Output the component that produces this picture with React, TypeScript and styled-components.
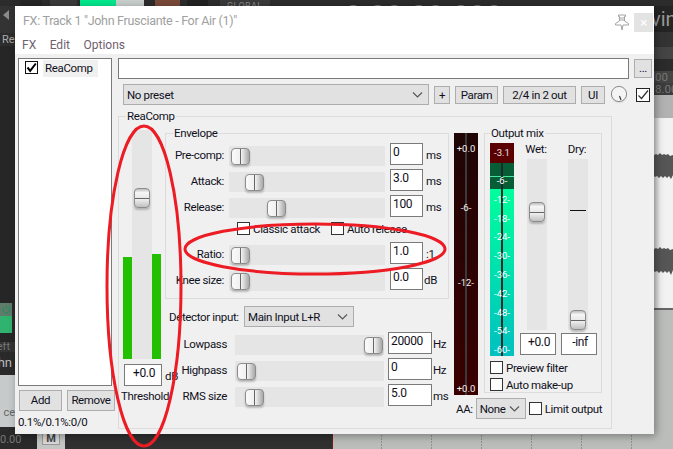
import React, { FC } from "react";
import styled, { createGlobalStyle } from "styled-components";

const Colors = {
    face: "#f0f0f0",
    control: "#e1e1e1",
    track: "#e5e5e5",
    line: "#dcdcdc",
    border: "#7a7a7a",
    btnBorder: "#adadad",
    text: "#10101c",
};

const GlobalStyle = createGlobalStyle`
    html, body {
        margin: 0;
        padding: 0;
        background: #2a2a2a;
    }
    * {
        box-sizing: border-box;
    }
    body {
        font-family: "Roboto", "Liberation Sans", sans-serif;
        font-size: 11.5px;
        letter-spacing: -0.35px;
        color: ${Colors.text};
    }
`;

type SliderProps = {
    label: string;
    value: string;
    unit: string;
    left: number;
    unitGap?: number;
};

const Chevron: FC = () => (
    <ChevronIcon width="11" height="6" viewBox="0 0 11 6">
        <polyline points="1,0.5 5.5,5 10,0.5" fill="none" stroke="#555" strokeWidth="1.1" />
    </ChevronIcon>
);

const CheckBox: FC<{ checked?: boolean }> = ({ checked }) => (
    <CheckSquare>
        {checked && (
            <svg width="11" height="11" viewBox="0 0 11 11">
                <polyline points="1.5,5.5 4.2,8.8 9.8,1.5" fill="none" stroke="#111" strokeWidth="1.7" />
            </svg>
        )}
    </CheckSquare>
);

const EnvelopeSlider: FC<SliderProps> = ({ label, value, unit, left, unitGap }) => (
    <EnvelopeRow>
        <EnvelopeLabel>{label}</EnvelopeLabel>
        <HTrack $width={156}>
            <HThumb $left={left} />
        </HTrack>
        <ValueBox $width={33}>{value}</ValueBox>
        <Unit $gap={unitGap}>{unit}</Unit>
    </EnvelopeRow>
);

const FilterSlider: FC<SliderProps> = ({ label, value, unit, left }) => (
    <FilterRow>
        <FilterLabel>{label}</FilterLabel>
        <HTrack $width={149}>
            <HThumb $left={left} />
        </HTrack>
        <FilterValue $width={44}>{value}</FilterValue>
        <Unit $gap={1}>{unit}</Unit>
    </FilterRow>
);

const meterTicks = [
    { label: "-6-", top: 38 },
    { label: "-12-", top: 57 },
    { label: "-18-", top: 76 },
    { label: "-24-", top: 94 },
    { label: "-30-", top: 113 },
    { label: "-36-", top: 132 },
    { label: "-42-", top: 151 },
    { label: "-48-", top: 170 },
    { label: "-54-", top: 188 },
    { label: "-60-", top: 207 },
];

const App: FC = () => {
    return (
        <Desktop>
            <GlobalStyle />
            <TopStrip>
                <TopGap $width={20} />
                <TopKnob $width={22} $color="#262626" />
                <TopGap $width={8} />
                <TopKnob $width={27} $color="#3a3a3a" />
                <TopGap $width={3} />
                <TopBlock $width={36} $color="#00e88c" />
                <TopKnob $width={28} $color="#c8cfcc" />
                <TopGap $width={11} />
                <TopKnob $width={25} $color="#7a4a38" />
                <TopGap $width={7} />
                <TopKnob $width={21} $color="#222" />
                <TopGap $width={12} />
                <TopLabel>GLOBAL</TopLabel>
                <TimeDigits>0:00:00.000</TimeDigits>
            </TopStrip>

            <Middle>
                <LeftStrip>
                    <LeftBand $height={27} $color="#333">
                        <BackArrow />
                    </LeftBand>
                    <LeftBand $height={13} $color="#2d2d2d">
                        <LeftText $color="#aaa" $left={2}>Re</LeftText>
                    </LeftBand>
                    <LeftBand $height={257} $color="#262626" />
                    <PowerBlock>
                        <PowerIcon width="9" height="9" viewBox="0 0 9 9">
                            <path d="M2.3 2 A3.4 3.4 0 1 0 6.7 2 M4.5 0.5 V4" fill="none" stroke="#1f8f55" strokeWidth="1" />
                        </PowerIcon>
                    </PowerBlock>
                    <PowerLit />
                    <LeftBand $height={9} $color="#262626" />
                    <LeftBand $height={10} $color="#333">
                        <LeftText $color="#777" $right={5} $line={10}>Left</LeftText>
                    </LeftBand>
                    <LeftBand $height={23} $color="#2a2a2a">
                        <LeftText $color="#bbb" $size={13} $right={3} $top={4}>John</LeftText>
                    </LeftBand>
                    <LeftBand $height={52} $color="#c6caca">
                        <LeftText $color="#666" $right={0} $top={31}>ce</LeftText>
                    </LeftBand>
                    <LeftBand $height={7} $color="#2a2a2a" />
                </LeftStrip>

                <FxWindow>
                    <TitleArea>
                        <TitleRow>
                            <TitleText>FX: Track 1 "John Frusciante - For Air (1)"</TitleText>
                            <PinIcon width="16" height="17" viewBox="0 0 16 17">
                                <path
                                    d="M4.5 1 H11.5 V2.5 H10.5 V7 L14.5 9.5 V11 H9 L8 16 L7 11 H1.5 V9.5 L5.5 7 V2.5 H4.5 Z M7 3 V7 M9 3 V7"
                                    fill="#fff"
                                    stroke="#9a9a9a"
                                    strokeWidth="0.9"
                                />
                            </PinIcon>
                            <CloseButton>×</CloseButton>
                        </TitleRow>
                        <MenuBar>
                            <MenuItem>FX</MenuItem>
                            <MenuItem>Edit</MenuItem>
                            <MenuItem>Options</MenuItem>
                        </MenuBar>
                    </TitleArea>

                    <WindowBody>
                        <Sidebar>
                            <FxList>
                                <FxItem>
                                    <FxCheck>
                                        <svg width="11" height="11" viewBox="0 0 11 11">
                                            <polyline points="1.5,5.5 4.2,8.8 9.8,1.5" fill="none" stroke="#000" strokeWidth="2" />
                                        </svg>
                                    </FxCheck>
                                    <FxName>ReaComp</FxName>
                                </FxItem>
                            </FxList>
                            <ListButtons>
                                <ActionButton $width={43} $height={21}>Add</ActionButton>
                                <ActionButton $width={48} $height={21}>Remove</ActionButton>
                            </ListButtons>
                            <StatusText>0.1%/0.1%:0/0</StatusText>
                        </Sidebar>

                        <MainPane>
                            <PathRow>
                                <PathInput />
                                <BrowseButton $width={18} $height={19}>...</BrowseButton>
                            </PathRow>
                            <PresetRow>
                                <ComboBox $width={306}>
                                    <span>No preset</span>
                                    <Chevron />
                                </ComboBox>
                                <ActionButton $width={16} $height={18}>+</ActionButton>
                                <ActionButton $width={43} $height={18}>Param</ActionButton>
                                <ActionButton $width={73} $height={18}>2/4 in 2 out</ActionButton>
                                <ActionButton $width={24} $height={18}>UI</ActionButton>
                                <KnobIcon width="18" height="20" viewBox="0 0 18 20">
                                    <circle cx="9" cy="10.5" r="8" fill="#d8d8d8" opacity="0.6" />
                                    <circle cx="9" cy="9" r="7.6" fill="#f4f4f4" stroke="#8a8a8a" />
                                    <line x1="9.5" y1="11" x2="11" y2="15" stroke="#333" strokeWidth="1.1" />
                                </KnobIcon>
                                <EnableBox>
                                    <svg width="12" height="12" viewBox="0 0 12 12">
                                        <polyline points="1.5,6.5 4.5,9.5 11,1.5" fill="none" stroke="#333" strokeWidth="1.2" />
                                    </svg>
                                </EnableBox>
                            </PresetRow>

                            <PluginGroup>
                                <GroupLegend $left={7}>ReaComp</GroupLegend>

                                <ThresholdColumn>
                                    <ThresholdFader>
                                        <LevelSlot>
                                            <LevelFill $height={102} />
                                        </LevelSlot>
                                        <VTrack $width={20} $height={229}>
                                            <VThumb $top={58} />
                                        </VTrack>
                                        <LevelSlot>
                                            <LevelFill $height={105} />
                                        </LevelSlot>
                                    </ThresholdFader>
                                    <ThresholdValue>
                                        <ValueBox $width={38} $center>+0.0</ValueBox>
                                        <Unit>dB</Unit>
                                    </ThresholdValue>
                                    <ThresholdLabel>Threshold</ThresholdLabel>
                                </ThresholdColumn>

                                <MiddleColumn>
                                    <EnvelopeGroup>
                                        <GroupLegend $left={7}>Envelope</GroupLegend>
                                        <EnvelopeSlider label="Pre-comp:" value="0" unit="ms" left={2} />
                                        <EnvelopeSlider label="Attack:" value="3.0" unit="ms" left={16} />
                                        <EnvelopeSlider label="Release:" value="100" unit="ms" left={38} />
                                        <AttackOptions>
                                            <CheckLabel $width={94}>
                                                <CheckBox />
                                                <span>Classic attack</span>
                                            </CheckLabel>
                                            <CheckLabel>
                                                <CheckBox />
                                                <span>Auto release</span>
                                            </CheckLabel>
                                        </AttackOptions>
                                        <EnvelopeSlider label="Ratio:" value="1.0" unit=":1" left={2} />
                                        <EnvelopeSlider label="Knee size:" value="0.0" unit="dB" left={2} unitGap={1} />
                                    </EnvelopeGroup>

                                    <DetectorRow>
                                        <DetectorLabel>Detector input:</DetectorLabel>
                                        <ComboBox $width={110}>
                                            <span>Main Input L+R</span>
                                            <Chevron />
                                        </ComboBox>
                                    </DetectorRow>
                                    <FilterSlider label="Lowpass" value="20000" unit="Hz" left={129} />
                                    <FilterSlider label="Highpass" value="0" unit="Hz" left={2} />
                                    <FilterSlider label="RMS size" value="5.0" unit="ms" left={10} />
                                </MiddleColumn>

                                <RightColumn>
                                    <MeterRow>
                                        <GainMeter>
                                            <GainLabel $top={10}>+0.0</GainLabel>
                                            <GainLabel $top={69}>-6-</GainLabel>
                                            <GainLabel $top={144}>-12-</GainLabel>
                                            <GainLabel $top={250}>+0.0</GainLabel>
                                        </GainMeter>
                                        <OutputGroup>
                                            <GroupLegend $left={5}>Output mix</GroupLegend>
                                            <OutputControls>
                                                <OutputMeter>
                                                    <PeakCell>-3.1</PeakCell>
                                                    <HeldCell />
                                                    <LevelCell />
                                                    {meterTicks.map((tick) => (
                                                        <MeterTick key={tick.label} $top={tick.top}>
                                                            {tick.label}
                                                        </MeterTick>
                                                    ))}
                                                </OutputMeter>
                                                <MixColumn>
                                                    <MixLabel>Wet:</MixLabel>
                                                    <VTrack $width={20} $height={171}>
                                                        <VThumb $top={43} />
                                                    </VTrack>
                                                    <ValueBox $width={36} $center>+0.0</ValueBox>
                                                </MixColumn>
                                                <MixColumn>
                                                    <MixLabel>Dry:</MixLabel>
                                                    <VTrack $width={20} $height={171}>
                                                        <UnityMark />
                                                        <VThumb $top={151} />
                                                    </VTrack>
                                                    <ValueBox $width={36} $center>-inf</ValueBox>
                                                </MixColumn>
                                            </OutputControls>
                                            <OutputChecks>
                                                <CheckLabel>
                                                    <CheckBox />
                                                    <span>Preview filter</span>
                                                </CheckLabel>
                                                <CheckLabel>
                                                    <CheckBox />
                                                    <span>Auto make-up</span>
                                                </CheckLabel>
                                            </OutputChecks>
                                        </OutputGroup>
                                    </MeterRow>
                                    <LimiterRow>
                                        <span>AA:</span>
                                        <ComboBox $width={50}>
                                            <span>None</span>
                                            <Chevron />
                                        </ComboBox>
                                        <CheckLabel>
                                            <CheckBox />
                                            <span>Limit output</span>
                                        </CheckLabel>
                                    </LimiterRow>
                                </RightColumn>
                            </PluginGroup>
                        </MainPane>
                    </WindowBody>
                </FxWindow>

                <RightStrip>
                    <RightBand $height={26} $color="#242424">
                        <VingText>ving</VingText>
                    </RightBand>
                    <RightBand $height={15} $color="#333" />
                    <RightBand $height={12} $color="#444" />
                    <RightBand $height={12} $color="#2b2b2b" />
                    <RightBand $height={12} $color="#444">
                        <RulerText>00</RulerText>
                    </RightBand>
                    <RightBand $height={12} $color="#3d3d3d">
                        <RulerText>8.00</RulerText>
                    </RightBand>
                    <RightBand $height={23} $color="#b2b2b2" />
                    <WaveLane>
                        <WaveShape width="19" height="190" viewBox="0 0 19 190">
                            <path
                                d="M0 37 L2 36 L4 37 L6 35 L8 37 L10 36 L12 37 L14 36 L16 38 L19 37 V57 L17 61 L15 58 L13 60 L11 58 L9 60 L7 58 L5 60 L3 58 L1 59 L0 58 Z"
                                fill="#565656"
                            />
                            <path
                                d="M0 131 L2 130 L4 131 L6 129 L8 131 L10 130 L12 131 L14 130 L16 132 L19 131 V152 L17 157 L15 153 L13 155 L11 153 L9 155 L7 153 L5 155 L3 153 L1 154 L0 153 Z"
                                fill="#565656"
                            />
                        </WaveShape>
                    </WaveLane>
                    <RightBand $height={2} $color="#666" />
                    <RightBand $height={124} $color="#bbbdbb" />
                </RightStrip>
            </Middle>

            <BottomStrip>
                <BottomReadout>0.00</BottomReadout>
                <MuteCell>
                    <MuteButton>M</MuteButton>
                </MuteCell>
                <BottomDark />
                <BottomRuler />
            </BottomStrip>

            <Annotations width="673" height="449" viewBox="0 0 673 449">
                <ellipse cx="144" cy="286" rx="37" ry="160" fill="none" stroke="#ed1c24" strokeWidth="3" />
                <ellipse cx="315" cy="249" rx="130" ry="25" fill="none" stroke="#ed1c24" strokeWidth="3" />
            </Annotations>
        </Desktop>
    );
};

export default App;

const Desktop = styled.div`
    position: relative;
    display: flex;
    flex-direction: column;
    width: 673px;
    height: 449px;
    overflow: hidden;
`;

const TopStrip = styled.div`
    display: flex;
    height: 6px;
    overflow: hidden;
    background: #2c2c2c;
`;

const TopGap = styled.div<{ $width: number }>`
    width: ${(p) => p.$width}px;
    flex-shrink: 0;
`;

const TopKnob = styled.div<{ $width: number; $color: string }>`
    width: ${(p) => p.$width}px;
    height: 12px;
    flex-shrink: 0;
    border-radius: 0 0 50% 50%;
    background: ${(p) => p.$color};
`;

const TopBlock = styled.div<{ $width: number; $color: string }>`
    width: ${(p) => p.$width}px;
    flex-shrink: 0;
    background: ${(p) => p.$color};
`;

const TopLabel = styled.div`
    width: 50px;
    flex-shrink: 0;
    padding-left: 7px;
    font-size: 9px;
    line-height: 12px;
    letter-spacing: 0.4px;
    color: #888;
    background: #3a3a3a;
`;

const TimeDigits = styled.div`
    margin: 4px 0 0 75px;
    font-size: 28px;
    line-height: 24px;
    letter-spacing: 1px;
    color: #777;
`;

const Middle = styled.div`
    display: flex;
    height: 428px;
`;

const LeftStrip = styled.div`
    display: flex;
    flex-direction: column;
    width: 15px;
    overflow: hidden;
`;

const LeftBand = styled.div<{ $height: number; $color: string }>`
    position: relative;
    height: ${(p) => p.$height}px;
    flex-shrink: 0;
    overflow: hidden;
    background: ${(p) => p.$color};
`;

const LeftText = styled.div<{ $color: string; $size?: number; $left?: number; $right?: number; $top?: number; $line?: number }>`
    position: absolute;
    top: ${(p) => p.$top ?? 0}px;
    ${(p) => (p.$right !== undefined ? `right: ${p.$right}px;` : `left: ${p.$left ?? 0}px;`)}
    font-size: ${(p) => p.$size ?? 11}px;
    line-height: ${(p) => p.$line ?? 13}px;
    letter-spacing: 0;
    white-space: nowrap;
    color: ${(p) => p.$color};
`;

const BackArrow = styled.div`
    width: 0;
    height: 0;
    margin: 4px 0 0 3px;
    border-style: solid;
    border-width: 5px 6px 5px 0;
    border-color: transparent #8a8a8a transparent transparent;
`;

const PowerBlock = styled.div`
    display: flex;
    align-items: center;
    justify-content: flex-end;
    height: 13px;
    flex-shrink: 0;
    width: 12px;
    padding-right: 1px;
    background: #5f7b6c;
`;

const PowerIcon = styled.svg`
    display: block;
`;

const PowerLit = styled.div`
    height: 17px;
    width: 12px;
    flex-shrink: 0;
    background: #2fb36f;
`;

const FxWindow = styled.div`
    position: relative;
    z-index: 1;
    display: flex;
    flex-direction: column;
    width: 639px;
    height: 428px;
    background: ${Colors.face};
    box-shadow: 2px 2px 8px rgba(0, 0, 0, 0.35);
`;

const TitleArea = styled.div`
    height: 48px;
    background: #fff;
`;

const TitleRow = styled.div`
    display: flex;
    align-items: flex-start;
    height: 30px;
    padding: 7px 1px 0 8px;
`;

const TitleText = styled.div`
    flex: 1;
    font-size: 12.5px;
    line-height: 16px;
    letter-spacing: -0.3px;
    color: #a0a0a0;
`;

const PinIcon = styled.svg`
    display: block;
    margin: 1px 4px 0 0;
`;

const CloseButton = styled.div`
    width: 19px;
    height: 19px;
    font-size: 13px;
    line-height: 19px;
    text-align: center;
    color: #fff;
    background: #e3e3e3;
`;

const MenuBar = styled.div`
    display: flex;
    padding-left: 7px;
`;

const MenuItem = styled.div`
    margin-right: 13.5px;
    font-size: 12px;
    line-height: 18px;
    letter-spacing: 0;
    color: #706070;
`;

const WindowBody = styled.div`
    display: flex;
    flex: 1;
`;

const Sidebar = styled.div`
    width: 103px;
    flex-shrink: 0;
    padding: 4px 0 0 3px;
`;

const FxList = styled.div`
    width: 94px;
    height: 328px;
    padding: 2px 0 0 6px;
    background: #fff;
    border: 1px solid ${Colors.border};
`;

const FxItem = styled.div`
    display: flex;
    align-items: flex-start;
`;

const FxCheck = styled.div`
    display: flex;
    align-items: center;
    justify-content: center;
    width: 13px;
    height: 13px;
    border: 1px solid #111;
`;

const FxName = styled.div`
    width: 55px;
    height: 17px;
    margin: -1px 0 0 5px;
    padding-left: 2px;
    line-height: 17px;
    background: ${Colors.face};
`;

const ListButtons = styled.div`
    display: flex;
    gap: 5px;
    margin: 4px 0 0 1px;
    width: 120px;
`;

const ActionButton = styled.div<{ $width: number; $height: number }>`
    width: ${(p) => p.$width}px;
    height: ${(p) => p.$height}px;
    flex-shrink: 0;
    line-height: ${(p) => p.$height - 2}px;
    text-align: center;
    white-space: nowrap;
    background: ${Colors.control};
    border: 1px solid ${Colors.btnBorder};
`;

const BrowseButton = styled(ActionButton)`
    margin-top: 1px;
`;

const StatusText = styled.div`
    margin-top: 3px;
    line-height: 16px;
    white-space: nowrap;
`;

const MainPane = styled.div`
    flex: 1;
    padding-top: 4px;
`;

const PathRow = styled.div`
    display: flex;
    align-items: flex-start;
    gap: 5px;
`;

const PathInput = styled.div`
    width: 511px;
    height: 21px;
    background: #fff;
    border: 1px solid ${Colors.border};
`;

const PresetRow = styled.div`
    display: flex;
    align-items: center;
    gap: 5px;
    height: 21px;
    margin-top: 5px;
    padding-left: 5px;
`;

const ComboBox = styled.div<{ $width: number }>`
    display: flex;
    align-items: center;
    justify-content: space-between;
    width: ${(p) => p.$width}px;
    height: 21px;
    flex-shrink: 0;
    padding: 0 5px 0 3px;
    white-space: nowrap;
    background: ${Colors.control};
    border: 1px solid ${Colors.btnBorder};
`;

const ChevronIcon = styled.svg`
    display: block;
    flex-shrink: 0;
`;

const KnobIcon = styled.svg`
    display: block;
    margin: 1px 0 0 0;
`;

const EnableBox = styled.div`
    display: flex;
    align-items: center;
    justify-content: center;
    width: 14px;
    height: 14px;
    margin-left: 3px;
    background: #fff;
    border: 1px solid #222;
`;

const PluginGroup = styled.div`
    position: relative;
    display: flex;
    align-items: flex-start;
    width: 494px;
    height: 313px;
    margin-top: 11px;
    padding: 13px 0 0 4px;
    border: 1px solid ${Colors.line};
`;

const GroupLegend = styled.div<{ $left: number }>`
    position: absolute;
    top: -8px;
    left: ${(p) => p.$left}px;
    padding: 0 1px;
    line-height: 15px;
    white-space: nowrap;
    background: ${Colors.face};
`;

const ThresholdColumn = styled.div`
    width: 42px;
    flex-shrink: 0;
`;

const ThresholdFader = styled.div`
    display: flex;
    width: 38px;
    height: 229px;
`;

const LevelSlot = styled.div`
    display: flex;
    align-items: flex-end;
    width: 9px;
`;

const LevelFill = styled.div<{ $height: number }>`
    width: 100%;
    height: ${(p) => p.$height}px;
    background: #22c000;
`;

const VTrack = styled.div<{ $width: number; $height: number }>`
    position: relative;
    width: ${(p) => p.$width}px;
    height: ${(p) => p.$height}px;
    flex-shrink: 0;
    background: ${Colors.track};
`;

const VThumb = styled.div<{ $top: number }>`
    position: absolute;
    top: ${(p) => p.$top}px;
    left: 2px;
    width: 16px;
    height: 20px;
    border: 1px solid #8c8c8c;
    border-radius: 4px;
    background: linear-gradient(180deg, #bdbdbd 0%, #f6f6f6 20%, #e8e8e8 50%, #666 50%, #666 54%, #f2f2f2 54%, #c0c0c0 100%);
    box-shadow: 0 2px 2px rgba(0, 0, 0, 0.22);
`;

const UnityMark = styled.div`
    position: absolute;
    top: 51px;
    left: 2px;
    width: 16px;
    height: 1px;
    background: #111;
`;

const ThresholdValue = styled.div`
    display: flex;
    align-items: flex-start;
    width: 60px;
    margin: 5px 0 0 1px;
`;

const ThresholdLabel = styled.div`
    margin: 2px 0 0 -2px;
    line-height: 16px;
`;

const MiddleColumn = styled.div`
    width: 284px;
    flex-shrink: 0;
    margin-top: 3px;
`;

const EnvelopeGroup = styled.div`
    position: relative;
    height: 166px;
    padding-top: 9px;
    border: 1px solid ${Colors.line};
`;

const EnvelopeRow = styled.div`
    display: flex;
    align-items: flex-start;
    height: 26px;
`;

const EnvelopeLabel = styled.div`
    width: 58px;
    margin-top: 3px;
    line-height: 18px;
    text-align: right;
    white-space: nowrap;
`;

const HTrack = styled.div<{ $width: number }>`
    position: relative;
    width: ${(p) => p.$width}px;
    height: 20px;
    flex-shrink: 0;
    margin: 3px 5px 0 5px;
    background: ${Colors.track};
`;

const HThumb = styled.div<{ $left: number }>`
    position: absolute;
    top: 2px;
    left: ${(p) => p.$left}px;
    width: 19px;
    height: 17px;
    border: 1px solid #8c8c8c;
    border-radius: 4px;
    background: linear-gradient(90deg, #fafafa 0%, #f0f0f0 48%, #666 48%, #666 54%, #f2f2f2 54%, #a8a8a8 100%);
    box-shadow: 0 2px 2px rgba(0, 0, 0, 0.22);
`;

const ValueBox = styled.div<{ $width: number; $center?: boolean }>`
    width: ${(p) => p.$width}px;
    height: 22px;
    flex-shrink: 0;
    padding: 0 0 0 2px;
    font-size: 12px;
    line-height: 17px;
    text-align: ${(p) => (p.$center ? "center" : "left")};
    background: #fff;
    border: 1px solid ${Colors.border};
`;

const FilterValue = styled(ValueBox)`
    margin-left: -1px;
`;

const Unit = styled.div<{ $gap?: number }>`
    margin: 4px 0 0 ${(p) => p.$gap ?? 3}px;
    line-height: 16px;
    white-space: nowrap;
`;

const AttackOptions = styled.div`
    display: flex;
    height: 21px;
    padding: 1px 0 0 71px;
`;

const CheckLabel = styled.div<{ $width?: number }>`
    display: flex;
    align-items: center;
    gap: 3px;
    height: 13px;
    ${(p) => (p.$width ? `width: ${p.$width}px;` : "")}
    white-space: nowrap;
`;

const CheckSquare = styled.div`
    display: flex;
    align-items: center;
    justify-content: center;
    width: 13px;
    height: 13px;
    flex-shrink: 0;
    background: #fff;
    border: 1px solid #333;
`;

const DetectorRow = styled.div`
    display: flex;
    align-items: center;
    gap: 5px;
    margin: 7px 0 5px;
    padding-left: 4px;
`;

const DetectorLabel = styled.div`
    width: 70px;
    white-space: nowrap;
`;

const FilterRow = styled.div`
    display: flex;
    align-items: flex-start;
    height: 26px;
`;

const FilterLabel = styled.div`
    width: 62px;
    margin: 3px 3px 0 0;
    line-height: 18px;
    text-align: right;
    white-space: nowrap;
`;

const RightColumn = styled.div`
    flex-shrink: 0;
    margin: 3px 0 0 5px;
`;

const MeterRow = styled.div`
    display: flex;
    align-items: flex-start;
    gap: 6px;
`;

const GainMeter = styled.div`
    position: relative;
    width: 24px;
    height: 262px;
    background: linear-gradient(180deg, #1f0505 0%, #3a0000 100%);

    &::before {
        content: "";
        position: absolute;
        top: 0;
        bottom: 0;
        left: 11px;
        width: 2px;
        background: #3a3a3a;
    }
`;

const GainLabel = styled.div<{ $top: number }>`
    position: absolute;
    top: ${(p) => p.$top}px;
    left: 0;
    width: 100%;
    font-size: 9.5px;
    line-height: 12px;
    letter-spacing: 0;
    text-align: center;
    color: #f0f0f0;
`;

const OutputGroup = styled.div`
    position: relative;
    width: 118px;
    height: 260px;
    padding: 9px 0 0 5px;
    border: 1px solid ${Colors.line};
`;

const OutputControls = styled.div`
    display: flex;
    align-items: flex-start;
    gap: 6px;
`;

const OutputMeter = styled.div`
    position: relative;
    display: flex;
    flex-direction: column;
    width: 24px;
    height: 213px;
    flex-shrink: 0;

    &::after {
        content: "";
        position: absolute;
        top: 20px;
        bottom: 0;
        left: 11px;
        width: 2px;
        background: #1c2c2c;
    }
`;

const PeakCell = styled.div`
    height: 20px;
    font-size: 9.5px;
    line-height: 20px;
    letter-spacing: 0;
    text-align: center;
    color: #e8e0e8;
    background: #5a0000;
`;

const HeldCell = styled.div`
    height: 26px;
    background: linear-gradient(180deg, #075e36 0 13px, #3fe89a 13px 14px, #075e36 14px);
`;

const LevelCell = styled.div`
    flex: 1;
    background: linear-gradient(180deg, #00ff9c 0%, #00c0c0 100%);
`;

const MeterTick = styled.div<{ $top: number }>`
    position: absolute;
    z-index: 1;
    top: ${(p) => p.$top - 6}px;
    left: 0;
    width: 100%;
    font-size: 9.5px;
    line-height: 12px;
    letter-spacing: 0;
    text-align: center;
    color: #fff;
`;

const MixColumn = styled.div`
    display: flex;
    flex-direction: column;
    align-items: center;
    width: 36px;
    flex-shrink: 0;
    margin-right: -1px;

    ${VTrack} {
        margin-right: 2px;
    }

    ${ValueBox} {
        margin-top: 3px;
    }
`;

const MixLabel = styled.div`
    height: 16px;
    margin-right: 4px;
    line-height: 13px;
`;

const OutputChecks = styled.div`
    display: flex;
    flex-direction: column;
    gap: 4px;
    margin-top: 5px;
`;

const LimiterRow = styled.div`
    display: flex;
    align-items: center;
    gap: 3px;
    margin-top: 3px;
    padding-left: 2px;
`;

const RightStrip = styled.div`
    display: flex;
    flex-direction: column;
    width: 19px;
    overflow: hidden;
`;

const RightBand = styled.div<{ $height: number; $color: string }>`
    height: ${(p) => p.$height}px;
    flex-shrink: 0;
    overflow: hidden;
    background: ${(p) => p.$color};
`;

const VingText = styled.div`
    margin-left: -3px;
    font-size: 20px;
    line-height: 26px;
    letter-spacing: 0;
    color: #999;
    white-space: nowrap;
`;

const RulerText = styled.div`
    margin-left: 1px;
    font-size: 11.5px;
    line-height: 12px;
    letter-spacing: 0;
    color: #777;
    white-space: nowrap;
`;

const WaveLane = styled.div`
    height: 190px;
    flex-shrink: 0;
    background: linear-gradient(90deg, #cfcfcf 0, #f2f2f2 6px);
`;

const WaveShape = styled.svg`
    display: block;
`;

const BottomStrip = styled.div`
    display: flex;
    height: 15px;
    overflow: hidden;
`;

const BottomReadout = styled.div`
    width: 37px;
    flex-shrink: 0;
    font-size: 11px;
    line-height: 12px;
    letter-spacing: 0;
    color: #777;
    background: #2a2a2a;
`;

const MuteCell = styled.div`
    width: 28px;
    flex-shrink: 0;
    padding: 0 5px;
    background: #c4c6c4;
`;

const MuteButton = styled.div`
    width: 18px;
    height: 11px;
    font-size: 11px;
    line-height: 10px;
    letter-spacing: 0;
    text-align: center;
    font-weight: 700;
    color: #444;
    background: #d8d8d8;
    border: 1px solid #999;
    border-top: 0;
`;

const BottomDark = styled.div`
    width: 268px;
    flex-shrink: 0;
    background: #303030;
    border-right: 1px solid #7a1a1a;
`;

const BottomRuler = styled.div`
    flex: 1;
    background-color: #bbbdbb;
    background-image:
        repeating-linear-gradient(180deg, #bbbdbb 0 1px, transparent 1px 3px),
        repeating-linear-gradient(90deg, transparent 0 49px, #8f918f 49px 50px);
    background-position: 0 0, -1px 0;
`;

const Annotations = styled.svg`
    position: absolute;
    z-index: 2;
    top: 0;
    left: 0;
    display: block;
    pointer-events: none;
`;
